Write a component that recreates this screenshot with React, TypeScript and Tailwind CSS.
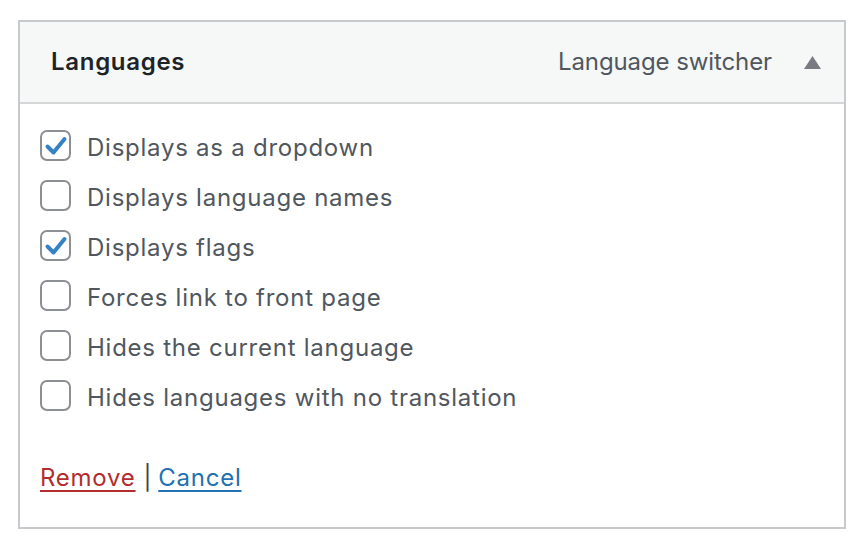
import { useState } from "react";

const options = [
  { label: "Displays as a dropdown", checked: true },
  { label: "Displays language names", checked: false },
  { label: "Displays flags", checked: true },
  { label: "Forces link to front page", checked: false },
  { label: "Hides the current language", checked: false },
  { label: "Hides languages with no translation", checked: false },
];

function Checkbox({ checked, onChange }: { checked: boolean; onChange: () => void }) {
  return (
    <button
      type="button"
      onClick={onChange}
      className="w-[31px] h-[31px] shrink-0 rounded-[7px] border-2 border-[#8c8f94] bg-white flex items-center justify-center"
    >
      {checked && (
        <svg width="24" height="22" viewBox="0 0 24 22">
          <path
            d="M3.5 11.5 L9.5 17.5 L20.5 4"
            fill="none"
            stroke="#3582c4"
            strokeWidth="4"
            strokeLinecap="round"
            strokeLinejoin="round"
          />
        </svg>
      )}
    </button>
  );
}

export default function App() {
  const [items, setItems] = useState(options);

  return (
    <div className="bg-white w-[868px] h-[550px] pt-[20px] pl-[18px] font-['Inter','Liberation_Sans',sans-serif]">
      <div className="w-[828px] h-[509px] border-2 border-[#c8c9cc] flex flex-col">
        <div className="h-[82px] bg-[#f6f7f7] border-b-2 border-[#d5d6d8] flex items-center justify-between pl-[31px] pr-[23px]">
          <h2 className="text-[24px] font-semibold tracking-[0.7px] text-[#1d2327]">Languages</h2>
          <div className="flex items-center gap-[32px]">
            <span className="text-[24px] tracking-[-0.1px] text-[#50575e]">Language switcher</span>
            <svg width="17" height="13" viewBox="0 0 17 13">
              <path d="M8.5 0 L17 13 L0 13 Z" fill="#787c82" />
            </svg>
          </div>
        </div>
        <div className="flex flex-col pl-[20px] pt-[26px]">
          <ul className="flex flex-col gap-[19px]">
            {items.map((item, i) => (
              <li key={item.label} className="flex items-center gap-[16px] h-[31px]">
                <Checkbox
                  checked={item.checked}
                  onChange={() =>
                    setItems(items.map((it, j) => (j === i ? { ...it, checked: !it.checked } : it)))
                  }
                />
                <span className="text-[24px] tracking-[0.75px] text-[#50575e] pt-[5px]">{item.label}</span>
              </li>
            ))}
          </ul>
          <div className="mt-[49px] text-[24px] tracking-[0.75px] text-[#3c434a] flex items-center">
            <a href="#" className="text-[#b32d2e] underline underline-offset-[4px] decoration-[1.5px]">
              Remove
            </a>
            <span className="pl-[8px] pr-[6px]">|</span>
            <a href="#" className="text-[#2271b1] underline underline-offset-[4px] decoration-[1.5px]">
              Cancel
            </a>
          </div>
        </div>
      </div>
    </div>
  );
}
